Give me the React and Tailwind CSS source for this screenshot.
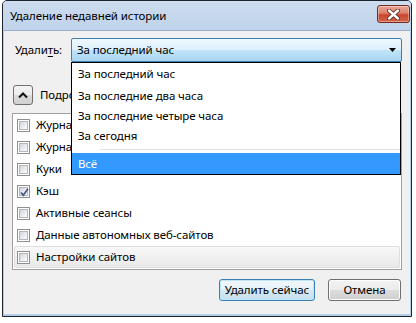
import React from "react";

const items = [
  { label: "Журнал посещений и загрузок" },
  { label: "Журнал форм и поиска" },
  { label: "Куки" },
  { label: "Кэш", checked: true },
  { label: "Активные сеансы" },
  { label: "Данные автономных веб-сайтов" },
  { label: "Настройки сайтов", hover: true },
];

const options = [
  { label: "За последний час", h: "h-[22px]" },
  { label: "За последние два часа", h: "h-[21px]" },
  { label: "За последние четыре часа", h: "h-[20px]" },
  { label: "За сегодня", h: "h-[20px]" },
];

function CloseButton() {
  return (
    <div className="w-[33px] h-[18px] rounded-[3px] border border-[#7a2a1d] bg-[linear-gradient(to_bottom,#e9a899_0%,#dc7f6a_45%,#c9472d_55%,#d1644a_100%)] shadow-[inset_0_0_0_1px_rgba(255,255,255,0.35)] flex items-center justify-center">
      <svg width="13" height="11" viewBox="0 0 13 11">
        <path d="M2 1.5 L11 9.5 M11 1.5 L2 9.5" stroke="#5a2418" strokeWidth="4" strokeLinecap="round" />
        <path d="M2 1.5 L11 9.5 M11 1.5 L2 9.5" stroke="#ffffff" strokeWidth="2.4" strokeLinecap="round" />
      </svg>
    </div>
  );
}

function TitleBar() {
  return (
    <div className="h-[29px] flex items-start justify-between pl-[7px] pr-[1px] bg-[linear-gradient(to_bottom,#cddcef,#bfd3ea)]">
      <span className="mt-[7px] leading-[16px]">Удаление недавней истории</span>
      <div className="mt-[4px]">
        <CloseButton />
      </div>
    </div>
  );
}

function CheckBox({ checked }) {
  return (
    <span className="relative w-[13px] h-[13px] border border-[#8e8f8f] bg-white p-[1px] flex shrink-0">
      <span className="flex-1 border border-[#b4b8bd] bg-[linear-gradient(135deg,#d0d3d8_0%,#eceef0_60%,#fbfbfb_100%)]" />
      {checked && (
        <svg className="absolute left-[1px] top-[1px]" width="11" height="11" viewBox="0 0 11 11">
          <path d="M2 5.5 L4.3 8.2 L9 1.8" fill="none" stroke="#4a5f8c" strokeWidth="1.8" />
        </svg>
      )}
    </span>
  );
}

function Row({ item }) {
  return (
    <div
      className={
        item.hover
          ? "h-[22px] flex items-center gap-[6px] pl-[2px] rounded-[2px] border border-[#dedede] bg-[linear-gradient(to_bottom,#f8f8f8,#e9e9e9)]"
          : "h-[22px] flex items-center gap-[6px] pl-[3px]"
      }
    >
      <CheckBox checked={item.checked} />
      <span className="leading-[16px] whitespace-nowrap">{item.label}</span>
    </div>
  );
}

function Button({ children, primary, width }) {
  return (
    <div
      className={
        (primary
          ? "border-[#3c7fb1] shadow-[inset_0_0_0_1px_#bfe6f8] bg-[linear-gradient(to_bottom,#f2f8fb_0%,#e6f2f8_50%,#d3e8f3_50%,#c7e0ee_100%)] "
          : "border-[#707070] shadow-[inset_0_0_0_1px_#fcfcfc] bg-[linear-gradient(to_bottom,#f2f2f2_0%,#ebebeb_50%,#dddddd_50%,#cfcfcf_100%)] ") +
        width +
        " h-[22px] rounded-[3px] border flex items-center justify-center leading-[16px]"
      }
    >
      {children}
    </div>
  );
}

// open list of the "Удалить" combobox, lying over the dialog
function Dropdown() {
  return (
    <div className="absolute left-[67px] top-[31px] w-[330px] border border-black bg-white flex flex-col">
      {options.map((o) => (
        <div key={o.label} className={o.h + " flex items-center pl-[6px] leading-[16px]"}>
          {o.label}
        </div>
      ))}
      <div className="h-[7px] flex items-center pl-[28px]">
        <div className="flex-1 border-t border-[#e2e2e2] border-b-white h-[2px] border-b" />
      </div>
      <div className="h-[21px] flex items-center pl-[6px] bg-[#3399ff] text-white leading-[16px]">Всё</div>
    </div>
  );
}

export default function App() {
  return (
    <div className="w-[416px] h-[323px] bg-white font-['Noto_Sans',sans-serif] text-[11.5px] tracking-[-0.1px] text-black">
      <div className="ml-[2px] w-[410px] h-[317px] border border-[#1c232c] rounded-t-[5px] flex flex-col bg-[#b6cde8] overflow-hidden">
        <TitleBar />
        <div className="relative flex-1 mx-[1px] mb-[2px] border-t border-[#98aec8] bg-[#f0f0f0] flex flex-col px-[8px] pt-[7px]">
          <div className="flex h-[24px] items-center">
            <span className="w-[59px] pl-[3px] leading-[16px]">
              Удали<span className="underline underline-offset-2">т</span>ь:
            </span>
            <div className="flex-1 h-[24px] rounded-[2px] border border-[#3c7fb1] bg-[linear-gradient(to_bottom,#eef7fd_0%,#ddf0fb_48%,#c1e4f8_52%,#a8d5f2_100%)] flex items-center justify-between pl-[5px] pr-[5px]">
              <span className="leading-[16px]">За последний час</span>
              <svg width="7" height="4" viewBox="0 0 7 4">
                <path d="M0 0 H7 L3.5 4 Z" fill="#000" />
              </svg>
            </div>
          </div>

          <div className="mt-[23px] flex items-center gap-[7px] pl-[1px] h-[20px]">
            <div className="w-[20px] h-[20px] shrink-0 rounded-[3px] border border-[#707070] bg-[linear-gradient(to_bottom,#f4f4f4_0%,#ebebeb_50%,#dcdcdc_50%,#d0d0d0_100%)] flex items-center justify-center">
              <svg width="10" height="7" viewBox="0 0 10 7">
                <path d="M1 5.5 L5 1.5 L9 5.5" fill="none" stroke="#111" strokeWidth="2" />
              </svg>
            </div>
            <span className="leading-[16px]">Подробности</span>
          </div>

          <div className="mt-[8px] h-[157px] border border-[#a0a0a0] bg-white px-[1px] flex flex-col">
            {items.map((it) => (
              <Row key={it.label} item={it} />
            ))}
          </div>

          <div className="mt-[9px] flex justify-end gap-[13px] pr-[1px]">
            <Button primary width="w-[96px]">Удалить сейчас</Button>
            <Button width="w-[73px]">Отмена</Button>
          </div>

          <Dropdown />
        </div>
      </div>
    </div>
  );
}
